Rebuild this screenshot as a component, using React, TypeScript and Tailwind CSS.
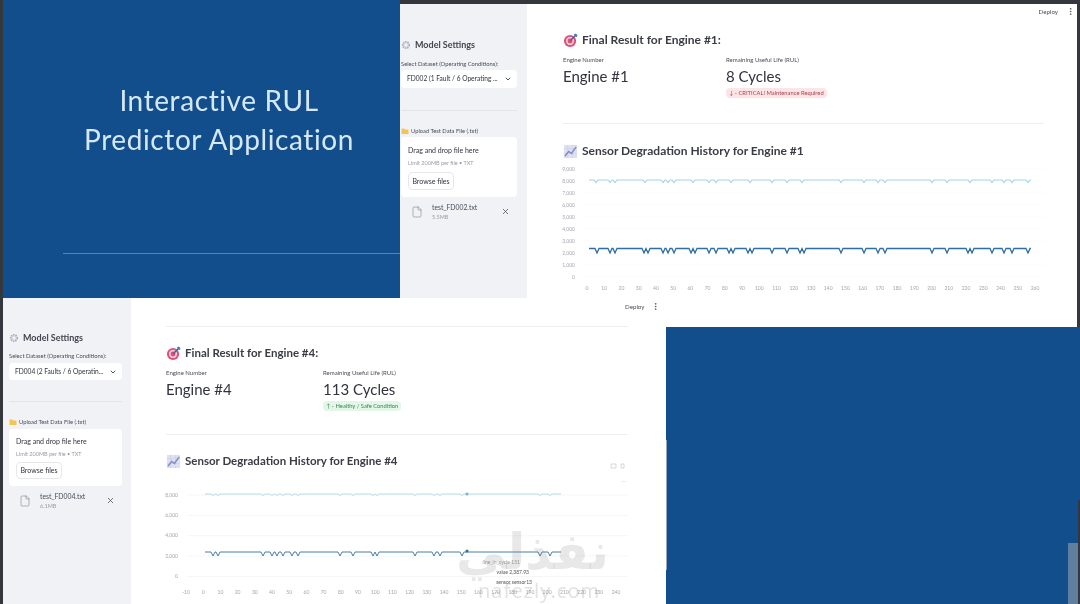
import { ChevronDown, EllipsisVertical, File, X } from "lucide-react";

const Target = () => (
  <svg width="15" height="15" viewBox="0 0 16 16" className="shrink-0">
    <circle cx="7.5" cy="8.5" r="6.5" fill="#dc5078" />
    <circle cx="7.5" cy="8.5" r="4.4" fill="#f3c6d2" />
    <circle cx="7.5" cy="8.5" r="2.6" fill="#dc5078" />
    <path d="M8 8 L13 3" stroke="#3f5f9f" strokeWidth="1.4" />
    <path d="M11.5 1.5 L12.5 3.5 L14.5 4.5 L15.5 2 L13.5 0.5 Z" fill="#4a78c8" />
  </svg>
);

const Trend = () => (
  <svg width="15" height="15" viewBox="0 0 16 16" className="shrink-0">
    <rect x="1" y="1" width="14" height="14" fill="#dfe0f0" />
    <path d="M1 5H15M1 10H15M5 1V15M10 1V15" stroke="#c8cbe4" strokeWidth="0.6" />
    <path d="M2 13 L6 8 L9 10 L14 3" stroke="#7f8fc8" strokeWidth="1.6" fill="none" />
  </svg>
);

const Gear = () => (
  <svg width="10" height="10" viewBox="0 0 16 16" className="shrink-0">
    <circle cx="8" cy="8" r="5" fill="none" stroke="#a9b0c0" strokeWidth="3" strokeDasharray="2.4 1.2" />
    <circle cx="8" cy="8" r="3.6" fill="none" stroke="#c8ccd8" strokeWidth="1.6" />
  </svg>
);

const Folder = () => (
  <svg width="8" height="8" viewBox="0 0 16 16" className="shrink-0">
    <path d="M1 3H6L8 5H15V14H1Z" fill="#f5c451" />
  </svg>
);

type Gaps = { wrap: string; label: string; sel: string; div: string; up: string; card: string; limit: string; btn: string };

const topGaps: Gaps = {
  wrap: "w-[127px] pt-[35px] pl-px pr-[10px]",
  label: "mt-[8px]",
  sel: "mt-[2px] h-[18px]",
  div: "mt-[22px]",
  up: "mt-[15px]",
  card: "mt-[2px] h-[60px] pt-[8px]",
  limit: "mt-[4px]",
  btn: "mt-[5px] h-[18px]",
};

const bottomGaps: Gaps = {
  wrap: "w-[128px] pt-[34px] pl-[6px] pr-[9px]",
  label: "mt-[7px]",
  sel: "mt-[3px] h-[17px]",
  div: "mt-[21px]",
  up: "mt-[15px]",
  card: "mt-[3px] h-[57px] pt-[7px]",
  limit: "mt-[4px]",
  btn: "mt-[4px] h-[17px]",
};

function Sidebar({ select, file, size, g }: { select: string; file: string; size: string; g: Gaps }) {
  return (
    <div className={`${g.wrap} h-full shrink-0 bg-[#f0f2f6] text-[#31333f]`}>
      <div className="flex items-center gap-[4px] h-[12px] text-[9px] font-bold text-[#44464f]"><Gear /><span>Model Settings</span></div>
      <div className={`${g.label} text-[5.8px] leading-[9px] text-[#4b4d58] whitespace-nowrap`}>Select Dataset (Operating Conditions):</div>
      <div className={`${g.sel} rounded-[4px] bg-white flex items-center justify-between pl-[6px] pr-[5px] text-[6.6px] whitespace-nowrap`}>
        <span>{select}</span>
        <ChevronDown size={8} strokeWidth={2.5} />
      </div>
      <div className={`${g.div} h-px bg-[#e2e4ea]`} />
      <div className={`${g.up} flex items-center gap-[2px] text-[5.8px] leading-[9px] text-[#4b4d58]`}><Folder /><span>Upload Test Data File (.txt)</span></div>
      <div className={`${g.card} rounded-[4px] bg-white pl-[7px]`}>
        <div className="text-[7px] leading-[10px] text-[#31333f]">Drag and drop file here</div>
        <div className={`${g.limit} text-[5.5px] leading-[8px] text-[#9a9ca6]`}>Limit 200MB per file • TXT</div>
        <div className={`${g.btn} w-[46px] rounded-[4px] border border-[#e6e7ec] flex items-center justify-center text-[7px]`}>Browse files</div>
      </div>
      <div className="mt-[5px] flex items-center pl-[10px] pr-[7px]">
        <File size={12} strokeWidth={1} className="text-[#6b6d78]" />
        <div className="ml-[9px] flex-1">
          <div className="text-[6.8px] leading-[10px] text-[#4b4d58]">{file}</div>
          <div className="text-[5.5px] leading-[8px] mt-px text-[#9a9ca6]">{size}</div>
        </div>
        <X size={9} strokeWidth={2} className="text-[#4b4d58]" />
      </div>
    </div>
  );
}

function Result({ n, rul, tone, badge, arrow, col, head, badgeGap }: { n: number; rul: string; tone: string; badge: string; arrow: string; col: string; head: string; badgeGap: string }) {
  return (
    <>
      <div className={`flex items-center gap-[4px] h-[16px] font-bold text-[#3a3c46] whitespace-nowrap ${head}`}><Target /><span>Final Result for Engine #{n}:</span></div>
      <div className="mt-[7px] flex text-[#31333f]">
        <div className={col}>
          <div className="text-[6px] leading-[9px] text-[#4b4d58]">Engine Number</div>
          <div className="mt-[2px] text-[15px] leading-[20px]">Engine #{n}</div>
        </div>
        <div className="flex flex-col items-start">
          <div className="text-[6px] leading-[9px] text-[#4b4d58]">Remaining Useful Life (RUL)</div>
          <div className="mt-[2px] text-[15px] leading-[20px]">{rul}</div>
          <div className={`${badgeGap} flex h-[10px] items-center rounded-[4px] px-[3px] text-[5.8px] whitespace-nowrap ${tone}`}>{arrow} {badge}</div>
        </div>
      </div>
    </>
  );
}

const dipPath = (x0: number, x1: number, y: number, d: number, dips: number[], w = 2) => {
  let p = `M${x0} ${y}`;
  for (const x of dips) {
    p += ` L${x - w} ${y} L${x} ${y + d} L${x + w} ${y}`;
  }
  return p + ` L${x1} ${y}`;
};

function TopChart() {
  const yl = ["9,000", "8,000", "7,000", "6,000", "5,000", "4,000", "3,000", "2,000", "1,000", "0"];
  const low = [597, 610, 615, 644, 648, 663, 668, 674, 691, 695, 709, 716, 729, 733, 748, 752, 772, 787, 800, 804, 841, 864, 878, 885, 932, 947, 968, 972, 992, 1004, 1012, 1028];
  const up = [596, 610, 615, 645, 663, 668, 674, 693, 709, 716, 731, 750, 772, 787, 802, 841, 864, 878, 885, 932, 947, 970, 992, 1004, 1012, 1028];
  return (
    <svg width="490" height="138" viewBox="560 160 490 138" className="block" fontFamily="'Lato', sans-serif">
      {yl.map((t, i) => (
        <g key={t}>
          <text x="575" y={171 + i * 12} fontSize="5" fill="#a4a6b0" textAnchor="end">{t}</text>
          <path d={`M582 ${169 + i * 12}H1044`} stroke="#f8f9fa" strokeWidth="0.7" />
        </g>
      ))}
      {Array.from({ length: 27 }, (_, i) => (
        <text key={i} x={587 + i * 17.23} y="289.5" fontSize="5" fill="#a4a6b0" textAnchor="middle">{i * 10}</text>
      ))}
      <path d={dipPath(589, 1031, 180, 2.5, up)} fill="none" stroke="#a5d3e8" strokeWidth="1.1" />
      <path d={dipPath(589, 1031, 248.5, 4.5, low)} fill="none" stroke="#2f6ea5" strokeWidth="1.3" />
    </svg>
  );
}

function BottomChart() {
  const yl = ["8,000", "6,000", "4,000", "2,000", "0"];
  const ys = [495, 515.5, 535.7, 556, 576.5];
  const low = [213, 218, 263, 272, 277, 283, 292, 298, 340, 353, 373, 377, 415, 434, 440, 462, 540, 550];
  return (
    <svg width="480" height="146" viewBox="160 458 480 146" className="block" fontFamily="'Lato', sans-serif">
      {yl.map((t, i) => (
        <g key={t}>
          <text x="178" y={ys[i] + 1.5} fontSize="5" fill="#a4a6b0" textAnchor="end">{t}</text>
          <path d={`M187 ${ys[i]}H628`} stroke="#f1f2f5" strokeWidth="0.7" />
        </g>
      ))}
      {Array.from({ length: 26 }, (_, i) => (
        <text key={i} x={186 + i * 17.2} y="593.5" fontSize="5" fill="#a4a6b0" textAnchor="middle">{(i - 1) * 10}</text>
      ))}
      <path d={dipPath(205, 561, 494, 1.5, low)} fill="none" stroke="#a5cfe3" strokeWidth="0.8" />
      <path d={dipPath(205, 561, 552, 4, low)} fill="none" stroke="#34709f" strokeWidth="0.9" />
      <circle cx="467" cy="494" r="1.5" fill="#7fb0d0" />
      <circle cx="467" cy="551" r="1.5" fill="#2f6ea5" />
      <text x="520" y="564" fontSize="5" fill="#999" textAnchor="end">line_in_cycle 151</text>
      <text x="529" y="574" fontSize="5" fill="#555" textAnchor="end">value 2,387.93</text>
      <text x="532" y="584" fontSize="5" fill="#555" textAnchor="end">sensor sensor13</text>
      <path d="M611 464h5v4h-5zM621 464h3v4h-3z" fill="none" stroke="#c2c5cd" strokeWidth="0.7" />
      <text x="624" y="482" fontSize="6" fill="#c2c5cd" textAnchor="middle">...</text>
    </svg>
  );
}

export default function App() {
  return (
    <div className="relative flex h-[604px] w-[1080px] flex-col overflow-hidden bg-[#124e8c] font-['Lato',sans-serif] blur-[0.35px]">
      <div className="flex h-[298px] shrink-0 bg-[#34373d]">
        <div className="ml-[3px] flex w-[397px] shrink-0 flex-col bg-[#124e8c]">
          <div className="mt-[81px] pl-[35px] text-center font-['Lato',sans-serif] text-[28px] leading-[39px] tracking-[0.6px] text-[#d5e8f8]">
            <div>Interactive RUL</div>
            <div>Predictor Application</div>
          </div>
          <div className="mt-[94px] ml-[60px] h-px bg-[#4a86c4]" />
        </div>
        <div className="mt-[4px] flex min-w-0 w-[677px] shrink-0 bg-white">
          <Sidebar g={topGaps} select="FD002 (1 Fault / 6 Operating ..." file="test_FD002.txt" size="5.5MB" />
          <div className="relative flex-1 pl-[36px] pr-[33px] pt-[28px]">
            <div className="absolute right-[2px] top-[3px] flex items-center gap-[8px] text-[6.2px] text-[#4b4d58]"><span>Deploy</span><EllipsisVertical size={9} strokeWidth={2} /></div>
            <Result n={1} rul="8 Cycles" tone="bg-[#fde4e6] text-[#a8434f]" badge="CRITICAL! Maintenance Required" arrow="↓ -" col="w-[163px]" head="text-[12px]" badgeGap="mt-[2px]" />
            <div className="mt-[25px] h-px bg-[#eceef1]" />
            <div className="mt-[19px] flex items-center gap-[4px] h-[16px] text-[12px] font-bold text-[#3a3c46] whitespace-nowrap"><Trend /><span>Sensor Degradation History for Engine #1</span></div>
          </div>
        </div>
      </div>
      <div className="flex min-h-0 flex-1">
        <div className="w-[3px] shrink-0 bg-[#34373d]" />
        <div className="flex w-[663px] shrink-0 bg-white">
          <Sidebar g={bottomGaps} select="FD004 (2 Faults / 6 Operatin..." file="test_FD004.txt" size="6.1MB" />
          <div className="relative flex-1 pl-[35px] pr-[38px] pt-[28px]">
            <div className="absolute left-[494px] top-[4px] flex items-center gap-[7px] text-[6.2px] text-[#4b4d58]"><span>Deploy</span><EllipsisVertical size={9} strokeWidth={2} /></div>
            <div className="h-px bg-[#eceef1]" />
            <div className="mt-[18px]"><Result n={4} rul="113 Cycles" tone="bg-[#e3f6e8] text-[#2f8a4e]" badge="Healthy / Safe Condition" arrow="↑ -" col="w-[157px]" head="text-[11.5px]" badgeGap="mt-[2px]" /></div>
            <div className="mt-[23px] h-px bg-[#eceef1]" />
            <div className="mt-[18px] flex items-center gap-[4px] h-[16px] text-[11.5px] font-bold text-[#3a3c46] whitespace-nowrap"><Trend /><span>Sensor Degradation History for Engine #4</span></div>
          </div>
        </div>
        <div className="flex flex-1 flex-col">
          <div className="flex h-[29px] shrink-0">
            <div className="w-[411px] bg-white" />
            <div className="flex-1 bg-[#34373d]" />
          </div>
          <div className="flex flex-1 items-end justify-end">
            <div className="h-[61px] w-[10px] bg-[#5f7f9f]" />
            <div className="h-[104px] w-[2px] bg-[#34373d]" />
          </div>
        </div>
      </div>
      <div className="absolute left-[560px] top-[160px]"><TopChart /></div>
      <div className="absolute left-[160px] top-[458px]"><BottomChart /></div>
      <div className="absolute left-[666px] top-[440px] h-[130px] w-px bg-[#8fa6bd]" />
      <div className="pointer-events-none absolute left-[456px] top-[522px] text-[50px] font-bold leading-[60px] text-[#8a8a8a]/20 font-['DejaVu_Sans',sans-serif]">نفذلي</div>
      <div className="pointer-events-none absolute left-[478px] top-[578px] font-['Noto_Sans',sans-serif] text-[20px] leading-[26px] text-[#8a8a8a]/25 tracking-[1px]">nafezly.com</div>
    </div>
  );
}
